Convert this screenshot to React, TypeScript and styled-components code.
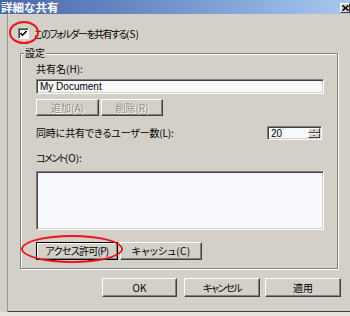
import React from "react";
import styled, { createGlobalStyle, css } from "styled-components";

const Global = createGlobalStyle`
  html, body { margin: 0; padding: 0; background: #d4d0c8; }
  body { font-family: "Noto Sans CJK JP", "Liberation Sans", sans-serif; }
`;

const FONT = `"Noto Sans CJK JP", "Liberation Sans", sans-serif`;

const Window = styled.div`
  width: 350px;
  height: 316px;
  background: #d4d0c8;
  display: flex;
  flex-direction: column;
  overflow: hidden;
  font-family: ${FONT};
  font-size: 10px;
  font-feature-settings: "palt";
  color: #000;
`;

const TitleBar = styled.div`
  height: 14px;
  flex: none;
  display: flex;
  align-items: center;
  justify-content: space-between;
  background: linear-gradient(to right, #4a68a8 0%, #6f8fca 45%, #a8c8f0 100%);
  padding-left: 1px;
`;

const TitleText = styled.span`
  color: #fff;
  font-weight: bold;
  font-size: 11.5px;
  line-height: 14px;
  font-feature-settings: normal;
`;

const CloseBtn = styled.div`
  width: 10px;
  height: 10px;
  margin-top: 2px;
  box-sizing: border-box;
  background: #d4d0c8;
  border-top: 1px solid #fff;
  border-left: 1px solid #fff;
  border-right: 1px solid #404040;
  border-bottom: 1px solid #404040;
  display: flex;
  align-items: center;
  justify-content: center;
`;

const Body = styled.div`
  flex: none;
  height: 298px;
  padding-left: 7px;
  display: flex;
`;

const Panel = styled.div`
  position: relative;
  flex: 1;
  box-sizing: border-box;
  border-left: 1px solid #9a9890;
  border-bottom: 1px solid #404040;
  display: flex;
  flex-direction: column;
`;

const Footer = styled.div`
  flex: 1;
  background: #e6e4de;
`;

const CheckRow = styled.div`
  display: flex;
  align-items: center;
  margin-top: 14px;
  margin-left: 10px;
  height: 11px;
`;

const CheckBox = styled.div`
  width: 11px;
  height: 11px;
  box-sizing: border-box;
  background: #fff;
  border-top: 1px solid #808080;
  border-left: 1px solid #808080;
  border-right: 1px solid #fff;
  border-bottom: 1px solid #fff;
  box-shadow: inset 1px 1px 0 #404040;
  display: flex;
  align-items: center;
  justify-content: center;
`;

const CheckLabel = styled.span`
  margin-left: 5px;
  font-size: 10px;
  line-height: 12px;
  letter-spacing: -1.5px;
`;

const Mnemonic = styled.span`
  letter-spacing: 0;
`;

const Group = styled.div`
  position: relative;
  margin-top: 14px;
  margin-left: 12px;
  width: 318px;
  height: 216px;
  box-sizing: border-box;
  border: 1px solid #808080;
  box-shadow: 1px 1px 0 #fff, inset 1px 1px 0 #fff;
  padding: 0 13px 0 15px;
  display: flex;
  flex-direction: column;
`;

const Legend = styled.span`
  position: absolute;
  top: -7px;
  left: 3px;
  padding: 0 1px;
  background: #d4d0c8;
  font-size: 10px;
  line-height: 12px;
`;

const Label = styled.div<{ $mt: number; $ls?: number }>`
  margin-top: ${(p) => p.$mt}px;
  font-size: 10px;
  line-height: 12px;
  height: 12px;
  letter-spacing: ${(p) => p.$ls ?? 0}px;
  white-space: nowrap;
`;

const sunken = css`
  box-sizing: border-box;
  background: #f7f9fc;
  border-top: 1px solid #808080;
  border-left: 1px solid #808080;
  border-right: 1px solid #fff;
  border-bottom: 1px solid #fff;
  box-shadow: inset 1px 1px 0 #404040, inset -1px -1px 0 #d4d0c8;
`;

const TextInput = styled.div`
  ${sunken};
  margin-top: 4px;
  height: 15px;
  width: 288px;
  padding-left: 3px;
  font-family: "Liberation Sans", sans-serif;
  font-size: 10px;
  line-height: 13px;
`;

const TextArea = styled.div`
  ${sunken};
  margin-top: 7px;
  height: 59px;
  width: 288px;
`;

const ButtonRow = styled.div<{ $mt: number; $ml?: number }>`
  display: flex;
  gap: 2px;
  margin-top: ${(p) => p.$mt}px;
  margin-left: ${(p) => p.$ml ?? 0}px;
`;

const Button = styled.div<{
  $w: number;
  $h: number;
  $ls?: number;
  $ml?: number;
  $disabled?: boolean;
  $default?: boolean;
}>`
  width: ${(p) => p.$w}px;
  height: ${(p) => p.$h}px;
  margin-left: ${(p) => p.$ml ?? 0}px;
  box-sizing: border-box;
  background: #d4d0c8;
  border-top: 1px solid #fff;
  border-left: 1px solid #fff;
  border-right: 1px solid #404040;
  border-bottom: 1px solid #404040;
  box-shadow: inset -1px -1px 0 #808080;
  display: flex;
  align-items: center;
  justify-content: center;
  font-size: 10px;
  line-height: 12px;
  letter-spacing: ${(p) => p.$ls ?? 0}px;
  white-space: nowrap;
  ${(p) =>
    p.$disabled &&
    css`
      color: #8c8a84;
      text-shadow: 1px 1px 0 #fff;
    `}
  ${(p) =>
    p.$default &&
    css`
      border: 1px solid #000;
      box-shadow: inset 1px 1px 0 #fff, inset -1px -1px 0 #808080;
    `}
`;

const SpinRow = styled.div`
  margin-top: 10px;
  height: 14px;
  display: flex;
  align-items: center;
  justify-content: space-between;
  padding-right: 2px;
`;

const Spinner = styled.div`
  ${sunken};
  width: 55px;
  height: 14px;
  display: flex;
  align-items: stretch;
  padding: 1px 1px 1px 3px;
`;

const SpinValue = styled.span`
  flex: 1;
  font-family: "Liberation Sans", sans-serif;
  font-size: 10px;
  line-height: 11px;
`;

const SpinButtons = styled.div`
  width: 12px;
  display: flex;
  flex-direction: column;
`;

const SpinBtn = styled.div`
  flex: 1;
  box-sizing: border-box;
  background: #d4d0c8;
  border-top: 1px solid #fff;
  border-left: 1px solid #fff;
  border-right: 1px solid #404040;
  border-bottom: 1px solid #404040;
  display: flex;
  align-items: center;
  justify-content: center;
`;

const Arrow = styled.div<{ $up?: boolean }>`
  width: 0;
  height: 0;
  border-left: 1.5px solid transparent;
  border-right: 1.5px solid transparent;
  ${(p) =>
    p.$up ? "border-bottom: 1.5px solid #000;" : "border-top: 1.5px solid #000;"}
`;

const Ellipse = styled.div<{ $x: number; $y: number; $w: number; $h: number }>`
  position: absolute;
  left: ${(p) => p.$x}px;
  top: ${(p) => p.$y}px;
  width: ${(p) => p.$w}px;
  height: ${(p) => p.$h}px;
  box-sizing: border-box;
  border: 2px solid #e8141c;
  border-radius: 50%;
  pointer-events: none;
`;

export default function App() {
  return (
    <>
      <Global />
      <Window>
        <TitleBar>
          <TitleText>詳細な共有</TitleText>
          <CloseBtn>
            <svg width="7" height="6" viewBox="0 0 7 6">
              <path d="M0.5 0.5 L6.5 5.5 M6.5 0.5 L0.5 5.5" stroke="#000" strokeWidth="1.6" />
            </svg>
          </CloseBtn>
        </TitleBar>
        <Body>
          <Panel>
            <CheckRow>
              <CheckBox>
                <svg width="7" height="7" viewBox="0 0 7 7">
                  <path d="M0.5 3 L2.5 5.2 L6.5 1" stroke="#000" strokeWidth="1.6" fill="none" />
                </svg>
              </CheckBox>
              <CheckLabel>
                このフォルダーを共有する<Mnemonic>(S)</Mnemonic>
              </CheckLabel>
            </CheckRow>
            <Group>
              <Legend>設定</Legend>
              <Label $mt={9}>共有名(H):</Label>
              <TextInput>My Document</TextInput>
              <ButtonRow $mt={5}>
                <Button $w={63} $h={17} $disabled>追加(A)</Button>
                <Button $w={62} $h={17} $disabled>削除(R)</Button>
              </ButtonRow>
              <SpinRow>
                <Label $mt={0} $ls={-0.15}>同時に共有できるユーザー数(L):</Label>
                <Spinner>
                  <SpinValue>20</SpinValue>
                  <SpinButtons>
                    <SpinBtn><Arrow $up /></SpinBtn>
                    <SpinBtn><Arrow /></SpinBtn>
                  </SpinButtons>
                </Spinner>
              </SpinRow>
              <Label $mt={12} $ls={-1.5}>
                コメント<Mnemonic>(O):</Mnemonic>
              </Label>
              <TextArea />
              <ButtonRow $mt={12}>
                <Button $w={82} $h={18} $ls={-0.7} $default>アクセス許可(P)</Button>
                <Button $w={82} $h={18} $ls={0.3}>キャッシュ(C)</Button>
              </ButtonRow>
            </Group>
            <ButtonRow $mt={9} $ml={94}>
              <Button $w={75} $h={19}>OK</Button>
              <Button $w={76} $h={19} $ml={5} $ls={-1.4}>キャンセル</Button>
              <Button $w={76} $h={19} $ml={3}>適用</Button>
            </ButtonRow>
            <Ellipse $x={1} $y={7} $w={30} $h={23} />
            <Ellipse $x={13} $y={221} $w={102} $h={28} />
          </Panel>
        </Body>
        <Footer />
      </Window>
    </>
  );
}
